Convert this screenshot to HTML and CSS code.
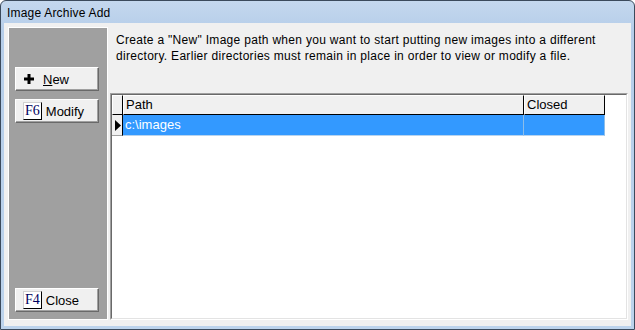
FILE: index.html
```html
<!DOCTYPE html>
<html>
<head>
<meta charset="utf-8">
<link rel="stylesheet" href="styles.css">
</head>
<body>
<div class="window">
  <div class="titlebar">Image Archive Add</div>
  <div class="client">
    <div class="panel">
      <div class="btn"><svg class="plus" width="10" height="10" viewBox="0 0 10 10"><path d="M3.5 0h3v3.5H10v3H6.5V10h-3V6.5H0v-3h3.5z" fill="#000"/></svg><span class="lbl"><u>N</u>ew</span></div>
      <div class="btn"><span class="key">F6</span><span class="lbl">Modify</span></div>
      <div class="btn close"><span class="key">F4</span><span class="lbl">Close</span></div>
    </div>
    <div class="main">
      <p class="info">Create a "New" Image path when you want to start putting new images into a different directory. Earlier directories must remain in place in order to view or modify a file.</p>
      <div class="grid">
        <div class="grid-inner">
          <div class="row head">
            <div class="cell ind"></div>
            <div class="cell path">Path</div>
            <div class="cell closed">Closed</div>
          </div>
          <div class="row sel">
            <div class="cell ind"><svg width="6" height="11" viewBox="0 0 6 11"><path d="M0 0L6 5.5L0 11z" fill="#000"/></svg></div>
            <div class="cell path">c:\images</div>
            <div class="cell closed"></div>
          </div>
        </div>
      </div>
    </div>
  </div>
</div>
</body>
</html>
```
FILE: styles.css
```css
* { box-sizing: border-box; }
html, body { margin: 0; padding: 0; }
body { width: 635px; height: 330px; overflow: hidden; background: #fff; font-family: "Liberation Sans", Arial, sans-serif; font-size: 12px; color: #000; }

.window {
  width: 635px; height: 330px;
  border: 1px solid #3b4a5c;
  border-radius: 6px 6px 0 0;
  background: linear-gradient(#c4d8ee, #b5cde9 30px, #bcd3ec);
  padding: 0 3px 3px 3px;
  display: flex; flex-direction: column;
}
.titlebar {
  height: 22px;
  line-height: 24px;
  padding-left: 3px;
  font-size: 12px;
  letter-spacing: 0.2px;
  color: #000;
}
.client {
  flex: 1;
  background: #f0f0f0;
  display: flex;
  padding: 4px 3px 6px 4px;
  gap: 2px;
}
.panel {
  width: 100px;
  background: #a0a0a0;
  border: 1px solid #fff;
  display: flex; flex-direction: column;
  padding: 39px 0 7px 6px;
  gap: 8px;
}
.btn {
  width: 84px; height: 24px;
  background: #f0f0f0;
  border: 1px solid;
  border-color: #fff #696969 #696969 #fff;
  box-shadow: inset -1px -1px 0 #a0a0a0;
  display: flex; align-items: center;
  padding-left: 7px;
  font-size: 13px;
}
.btn.close { margin-top: auto; }
.plus { margin: 0 9px 0 1px; }
.key {
  font-family: "Liberation Serif", "Times New Roman", serif;
  font-size: 14px;
  color: #000060;
  background: #fff;
  border: 1px solid;
  border-color: #d0d0d0 #000 #000 #d0d0d0;
  padding: 0 1px;
  line-height: 15px;
  height: 18px;
  margin-right: 4px;
}
.lbl { color: #000; }

.main {
  flex: 1;
  display: flex; flex-direction: column;
}
.info {
  margin: 5px 0 0 6px;
  line-height: 16px;
  font-size: 12px;
  letter-spacing: 0.3px;
}
.grid {
  margin-top: auto;
  height: 227px;
  border: 1px solid;
  border-color: #a0a0a0 #fff #fff #a0a0a0;
}
.grid-inner {
  height: 100%;
  background: #fff;
  border: 1px solid;
  border-color: #696969 #e3e3e3 #e3e3e3 #696969;
}
.row { display: flex; }
.head .cell {
  height: 20px;
  background: #f0f0f0;
  border-top: 1px solid #fff;
  border-left: 1px solid #fff;
  border-right: 1px solid #000;
  border-bottom: 1px solid #000;
  padding-left: 2px;
  line-height: 18px;
  font-size: 13px;
}
.cell.ind { width: 11px; padding: 0; }
.cell.path { width: 401px; }
.cell.closed { width: 81px; }
.sel .cell {
  height: 21px;
  line-height: 19px;
  font-size: 13px;
  padding-left: 2px;
}
.sel .ind {
  background: #f0f0f0;
  border-right: 1px solid #000;
  border-bottom: 1px solid #a0a0a0;
  display: flex; align-items: center; justify-content: center;
}
.sel .path, .sel .closed {
  background: #3399ff;
  color: #fff;
  border-right: 1px solid #8cbde9;
  border-bottom: 1px solid #b7d3ee;
}
```
